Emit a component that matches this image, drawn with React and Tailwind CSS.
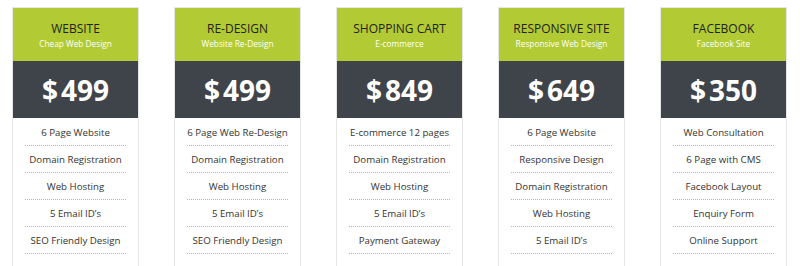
import React from 'react';

const plans = [
  { title: 'WEBSITE', sub: 'Cheap Web Design', price: '499', items: ['6 Page Website', 'Domain Registration', 'Web Hosting', '5 Email ID’s', 'SEO Friendly Design'] },
  { title: 'RE-DESIGN', sub: 'Website Re-Design', price: '499', items: ['6 Page Web Re-Design', 'Domain Registration', 'Web Hosting', '5 Email ID’s', 'SEO Friendly Design'] },
  { title: 'SHOPPING CART', sub: 'E-commerce', price: '849', items: ['E-commerce 12 pages', 'Domain Registration', 'Web Hosting', '5 Email ID’s', 'Payment Gateway'] },
  { title: 'RESPONSIVE SITE', sub: 'Responsive Web Design', price: '649', items: ['6 Page Website', 'Responsive Design', 'Domain Registration', 'Web Hosting', '5 Email ID’s'] },
  { title: 'FACEBOOK', sub: 'Facebook Site', price: '350', items: ['Web Consultation', '6 Page with CMS', 'Facebook Layout', 'Enquiry Form', 'Online Support'] },
];

function Card({ plan }) {
  return (
    <div className="w-[127px] shrink-0 border border-[#e6e6e6] bg-white">
      <div className="h-[53px] bg-[#b2cb34] flex flex-col items-center justify-center pt-[2px]">
        <div className="text-[12px] leading-[16px] text-[#222] whitespace-nowrap">{plan.title}</div>
        <div className="text-[8.3px] leading-[14px] text-white whitespace-nowrap">{plan.sub}</div>
      </div>
      <div className="h-[57px] bg-[#3f444a] flex items-center justify-center text-white font-bold text-[28px] leading-none">
        <span>$</span><span className="ml-[3px]">{plan.price}</span>
      </div>
      <ul className="px-3 pt-px pb-6">
        {plan.items.map((it, i) => (
          <li key={i} className="h-[27px] flex items-center justify-center border-b border-dotted border-[#b5b5b5] text-[9.7px] text-[#333] pt-[2px] whitespace-nowrap">
            {it}
          </li>
        ))}
      </ul>
    </div>
  );
}

export default function App() {
  return (
    <div className="w-[800px] h-[266px] overflow-hidden bg-white font-['Open_Sans',sans-serif]">
      <div className="flex gap-[35px] pl-[12px] pt-[7px]">
        {plans.map((p, i) => <Card key={i} plan={p} />)}
      </div>
    </div>
  );
}
